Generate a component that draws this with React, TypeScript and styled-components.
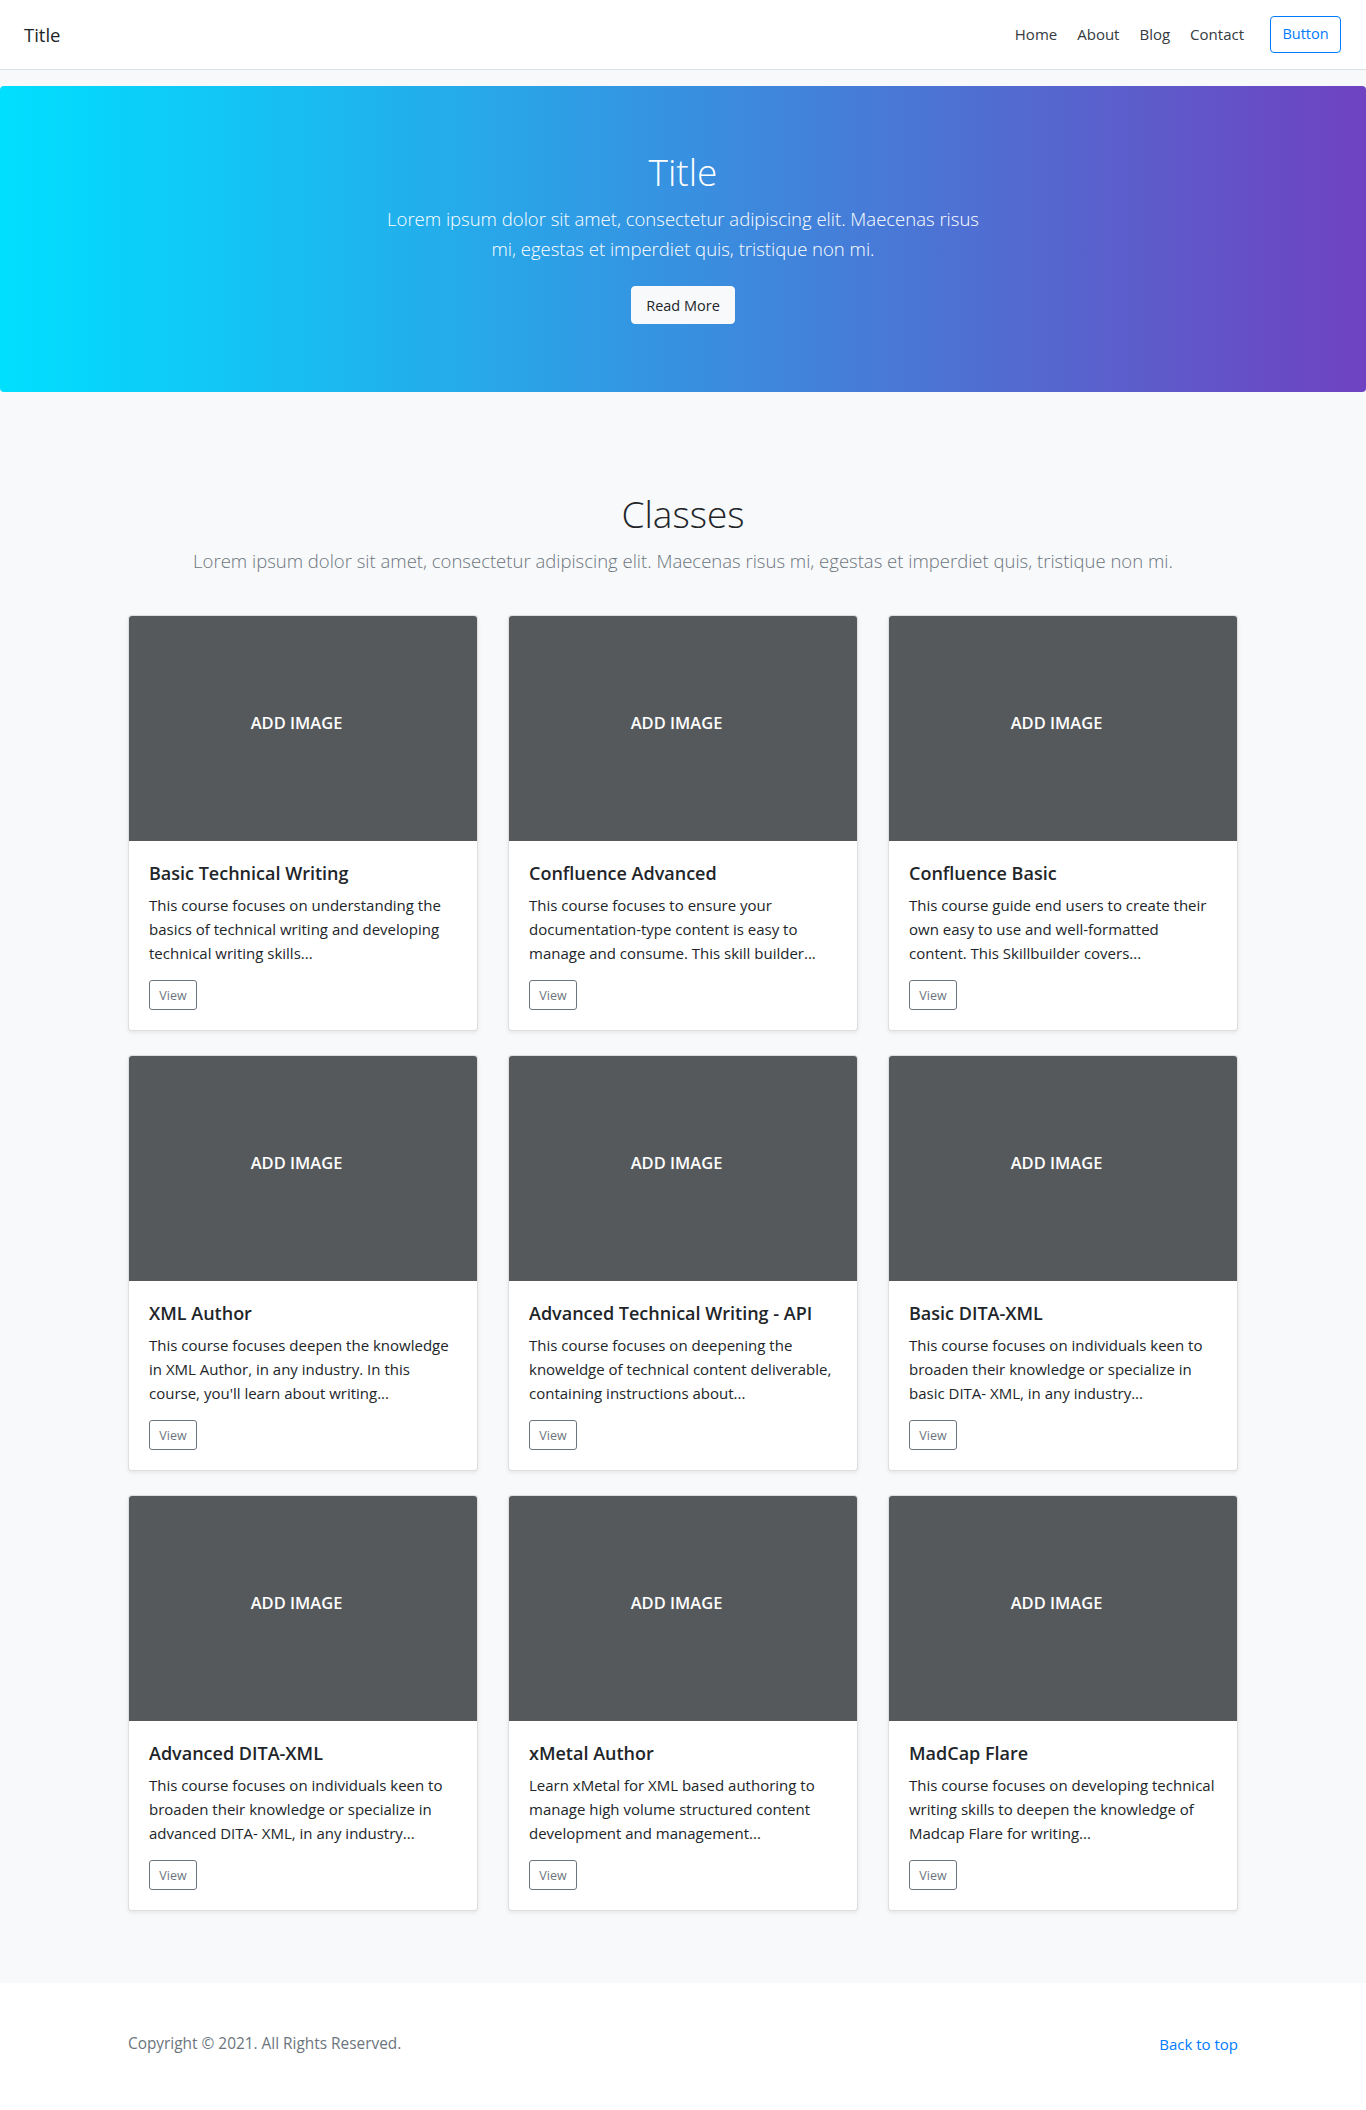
import styled, { createGlobalStyle } from 'styled-components';

const GlobalStyle = createGlobalStyle`
  * {
    box-sizing: border-box;
  }
  body {
    margin: 0;
    background: #ffffff;
    color: #212529;
    font-family: 'Open Sans', 'Noto Sans', Arial, sans-serif;
    font-size: 15px;
    line-height: 1.5;
  }
`;

const StyledNavbar = styled.header`
  align-items: center;
  background: #ffffff;
  border-bottom: 1px solid #dee2e6;
  display: flex;
  height: 70px;
  justify-content: space-between;
  padding: 0 25px 0 24px;
`;

const StyledBrand = styled.a`
  color: #212529;
  font-size: 18.5px;
  text-decoration: none;
`;

const StyledNav = styled.nav`
  align-items: center;
  display: flex;
`;

const StyledNavLink = styled.a`
  color: #343a40;
  font-size: 15px;
  padding: 8px 10px;
  text-decoration: none;
`;

const StyledOutlineButton = styled.button`
  background: transparent;
  border: 1px solid #007bff;
  border-radius: 4px;
  color: #007bff;
  font-family: inherit;
  font-size: 14.5px;
  height: 37px;
  line-height: 1;
  margin-left: 16px;
  padding: 0 11px;
  width: 71px;
`;

const StyledMain = styled.main`
  background: #f8f9fa;
  padding-top: 16px;
`;

const StyledHero = styled.section`
  align-items: center;
  background: linear-gradient(90deg, #00dfff 0%, #6f42c1 100%);
  border-radius: 4px;
  display: flex;
  flex-direction: column;
  height: 306px;
  padding-top: 62px;
  text-align: center;
`;

const StyledHeroTitle = styled.h1`
  color: #ffffff;
  font-size: 37px;
  font-weight: 300;
  line-height: 48px;
  margin: 0 0 8px;
`;

const StyledHeroLead = styled.p`
  color: #ffffff;
  font-size: 18.5px;
  font-weight: 300;
  line-height: 30px;
  margin: 0 0 22px;
  max-width: 600px;
`;

const StyledLightButton = styled.button`
  background: #f8f9fa;
  border: 1px solid #f8f9fa;
  border-radius: 4px;
  color: #212529;
  font-family: inherit;
  font-size: 14.5px;
  height: 38px;
  padding: 0 11px;
  width: 104px;
`;

const StyledAlbum = styled.section`
  padding: 98px 0 48px;
`;

const StyledContainer = styled.div`
  margin: 0 auto;
  width: 1110px;
`;

const StyledSectionHead = styled.div`
  margin-bottom: 39px;
  text-align: center;
`;

const StyledSectionTitle = styled.h2`
  color: #212529;
  font-size: 37px;
  font-weight: 300;
  line-height: 48px;
  margin: 0 0 8px;
`;

const StyledSectionLead = styled.p`
  color: #6c757d;
  font-size: 18.5px;
  font-weight: 300;
  line-height: 30px;
  margin: 0;
`;

const StyledGrid = styled.div`
  display: grid;
  gap: 24px 30px;
  grid-template-columns: repeat(3, 1fr);
  padding-bottom: 24px;
`;

const StyledCard = styled.article`
  background: #ffffff;
  border: 1px solid rgba(0, 0, 0, 0.125);
  border-radius: 4px;
  box-shadow: 0 2px 4px rgba(0, 0, 0, 0.075);
  display: flex;
  flex-direction: column;
  overflow: hidden;
`;

const StyledThumb = styled.div`
  align-items: center;
  background: #55595c;
  color: #ffffff;
  display: flex;
  font-size: 16.5px;
  font-weight: 600;
  height: 225px;
  justify-content: center;
  padding: 0 13px 10px 0;
`;

const StyledCardBody = styled.div`
  padding: 20px 20px 20px;
`;

const StyledCardTitle = styled.h5`
  color: #212529;
  font-size: 18px;
  font-weight: 600;
  line-height: 24px;
  margin: 0 0 8px;
`;

const StyledCardText = styled.p`
  color: #212529;
  font-size: 15px;
  line-height: 24px;
  margin: 0 0 15px;
`;

const StyledViewButton = styled.button`
  background: transparent;
  border: 1px solid #6c757d;
  border-radius: 3px;
  color: #6c757d;
  font-family: inherit;
  font-size: 12.5px;
  height: 30px;
  padding: 0 7px;
  width: 48px;
`;

const StyledFooter = styled.footer`
  align-items: center;
  display: flex;
  height: 124px;
  justify-content: space-between;
  margin: 0 auto;
  padding-bottom: 2px;
  width: 1110px;
`;

const StyledCopyright = styled.p`
  color: #6c757d;
  font-size: 15.4px;
  margin: 0;
`;

const StyledTopLink = styled.a`
  color: #007bff;
  font-size: 15px;
  text-decoration: none;
`;

const COURSES = [
  {
    title: 'Basic Technical Writing',
    text: 'This course focuses on understanding the basics of technical writing and developing technical writing skills...',
  },
  {
    title: 'Confluence Advanced',
    text: 'This course focuses to ensure your documentation-type content is easy to manage and consume. This skill builder...',
  },
  {
    title: 'Confluence Basic',
    text: 'This course guide end users to create their own easy to use and well-formatted content. This Skillbuilder covers...',
  },
  {
    title: 'XML Author',
    text: "This course focuses deepen the knowledge in XML Author, in any industry. In this course, you'll learn about writing...",
  },
  {
    title: 'Advanced Technical Writing - API',
    text: 'This course focuses on deepening the knoweldge of technical content deliverable, containing instructions about...',
  },
  {
    title: 'Basic DITA-XML',
    text: 'This course focuses on individuals keen to broaden their knowledge or specialize in basic DITA- XML, in any industry...',
  },
  {
    title: 'Advanced DITA-XML',
    text: 'This course focuses on individuals keen to broaden their knowledge or specialize in advanced DITA- XML, in any industry...',
  },
  {
    title: 'xMetal Author',
    text: 'Learn xMetal for XML based authoring to manage high volume structured content development and management...',
  },
  {
    title: 'MadCap Flare',
    text: 'This course focuses on developing technical writing skills to deepen the knowledge of Madcap Flare for writing...',
  },
];

const App = () => {
  return (
    <>
      <GlobalStyle />
      <StyledNavbar>
        <StyledBrand href="#">Title</StyledBrand>
        <StyledNav>
          <StyledNavLink href="#">Home</StyledNavLink>
          <StyledNavLink href="#">About</StyledNavLink>
          <StyledNavLink href="#">Blog</StyledNavLink>
          <StyledNavLink href="#">Contact</StyledNavLink>
          <StyledOutlineButton>Button</StyledOutlineButton>
        </StyledNav>
      </StyledNavbar>
      <StyledMain>
        <StyledHero>
          <StyledHeroTitle>Title</StyledHeroTitle>
          <StyledHeroLead>
            Lorem ipsum dolor sit amet, consectetur adipiscing elit. Maecenas risus mi, egestas et
            imperdiet quis, tristique non mi.
          </StyledHeroLead>
          <StyledLightButton>Read More</StyledLightButton>
        </StyledHero>
        <StyledAlbum>
          <StyledContainer>
            <StyledSectionHead>
              <StyledSectionTitle>Classes</StyledSectionTitle>
              <StyledSectionLead>
                Lorem ipsum dolor sit amet, consectetur adipiscing elit. Maecenas risus mi, egestas
                et imperdiet quis, tristique non mi.
              </StyledSectionLead>
            </StyledSectionHead>
            <StyledGrid>
              {COURSES.map((course) => (
                <StyledCard key={course.title}>
                  <StyledThumb>ADD IMAGE</StyledThumb>
                  <StyledCardBody>
                    <StyledCardTitle>{course.title}</StyledCardTitle>
                    <StyledCardText>{course.text}</StyledCardText>
                    <StyledViewButton>View</StyledViewButton>
                  </StyledCardBody>
                </StyledCard>
              ))}
            </StyledGrid>
          </StyledContainer>
        </StyledAlbum>
      </StyledMain>
      <StyledFooter>
        <StyledCopyright>Copyright © 2021. All Rights Reserved.</StyledCopyright>
        <StyledTopLink href="#">Back to top</StyledTopLink>
      </StyledFooter>
    </>
  );
};

export default App;
